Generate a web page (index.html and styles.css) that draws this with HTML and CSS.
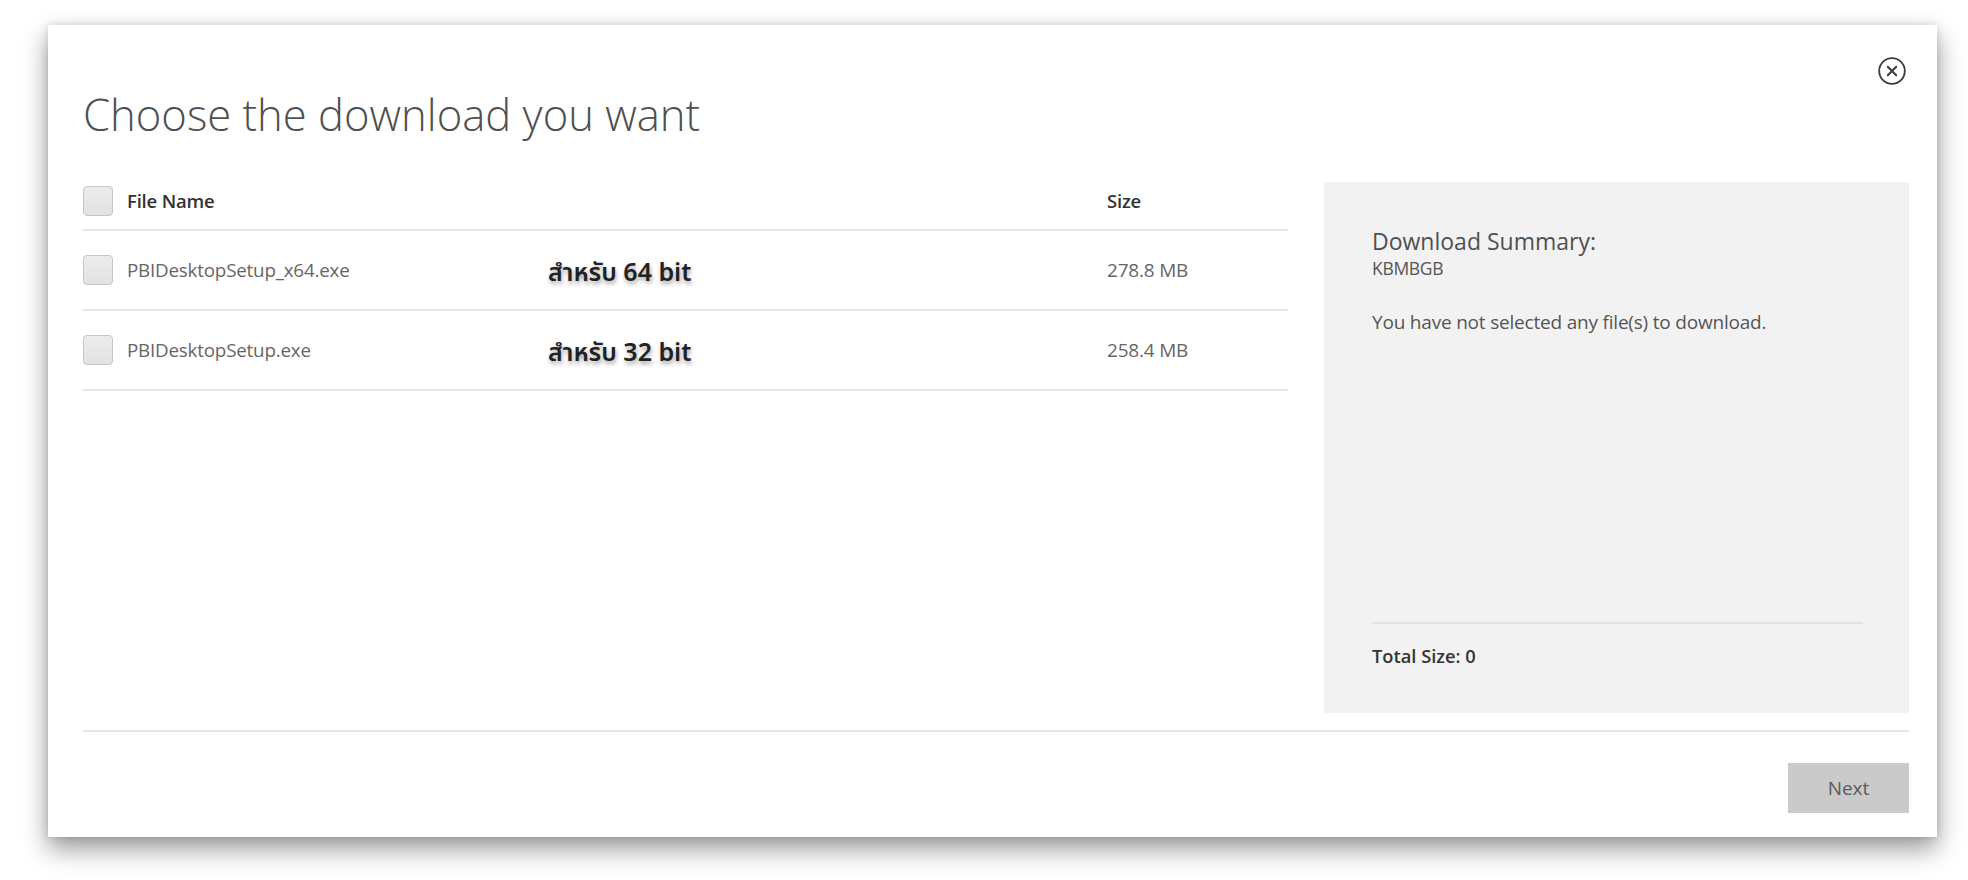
FILE: index.html
```html
<!DOCTYPE html>
<html lang="en">
<head>
<meta charset="utf-8">
<title>Choose the download you want</title>
<link rel="stylesheet" href="styles.css">
</head>
<body>
<div class="dialog">
  <button class="close" aria-label="Close">
    <svg width="30" height="30" viewBox="0 0 30 30"><circle cx="15" cy="15" r="12.8" fill="none" stroke="#3c3c3c" stroke-width="1.8"/><path d="M10.8 10.8 L19.2 19.2 M19.2 10.8 L10.8 19.2" stroke="#3c3c3c" stroke-width="2" stroke-linecap="round"/></svg>
  </button>
  <h1 class="title">Choose the download you want</h1>
  <div class="main">
    <div class="table">
      <div class="row head">
        <span class="check"></span>
        <span class="name">File Name</span>
        <span class="note"></span>
        <span class="size">Size</span>
      </div>
      <div class="row">
        <span class="check"></span>
        <span class="name">PBIDesktopSetup_x64.exe</span>
        <span class="note">สำหรับ 64 bit</span>
        <span class="size">278.8 MB</span>
      </div>
      <div class="row">
        <span class="check"></span>
        <span class="name">PBIDesktopSetup.exe</span>
        <span class="note">สำหรับ 32 bit</span>
        <span class="size">258.4 MB</span>
      </div>
    </div>
    <aside class="summary">
      <div class="summary-top">
        <h2 class="summary-title">Download Summary:</h2>
        <div class="summary-code">KBMBGB</div>
        <p class="summary-msg">You have not selected any file(s) to download.</p>
      </div>
      <div class="summary-total">Total Size: 0</div>
    </aside>
  </div>
  <div class="footer">
    <button class="next">Next</button>
  </div>
</div>
</body>
</html>
```

FILE: styles.css
```css
html, body {
  margin: 0;
  padding: 0;
  background: #ffffff;
}
body {
  width: 1968px;
  height: 880px;
  overflow: hidden;
  font-family: "Open Sans", "Noto Sans", "DejaVu Sans", sans-serif;
  color: #444;
}
.dialog {
  position: relative;
  box-sizing: border-box;
  width: 1889px;
  height: 812px;
  margin: 25px 0 0 48px;
  padding: 0 28px 0 35px;
  background: #fff;
  display: flex;
  flex-direction: column;
  box-shadow: 0 12px 24px rgba(0,0,0,0.4), 0 0 8px rgba(0,0,0,0.14);
}
.close {
  position: absolute;
  top: 31px;
  right: 30px;
  width: 30px;
  height: 30px;
  padding: 0;
  border: 0;
  background: none;
  display: flex;
}
.title {
  box-sizing: border-box;
  height: 157px;
  margin: 0;
  padding-top: 63px;
  font-size: 43.6px;
  line-height: 52px;
  font-weight: 300;
  color: #505050;
  white-space: nowrap;
}
.main {
  display: flex;
  gap: 36px;
  height: 531px;
}
.table {
  width: 1205px;
  flex: none;
}
.row {
  box-sizing: border-box;
  display: grid;
  grid-template-columns: 44px 421px 559px 1fr;
  align-items: center;
  height: 80px;
  border-bottom: 2px solid #e6e6e6;
}
.row.head {
  height: 49px;
  padding-bottom: 10px;
}
.check {
  box-sizing: border-box;
  width: 30px;
  height: 30px;
  border: 1px solid #c6c6c6;
  border-radius: 4px;
  background: linear-gradient(#ececec, #e2e2e2);
}
.name {
  font-size: 18.8px;
  letter-spacing: -0.2px;
  color: #666;
}
.size {
  font-size: 19px;
  letter-spacing: -0.2px;
  color: #666;
}
.head .name, .head .size {
  font-size: 18.5px;
  font-weight: 600;
  color: #333;
}
.note {
  font-family: "Noto Sans Thai", "Noto Sans", "DejaVu Sans", sans-serif;
  font-size: 25px;
  font-weight: 600;
  color: #222;
  padding-top: 6px;
  text-shadow: 1px 3px 4px rgba(0,0,0,0.35);
}
.summary {
  box-sizing: border-box;
  width: 585px;
  flex: none;
  background: #f2f2f2;
  padding: 0 46px 0 48px;
  display: flex;
  flex-direction: column;
  justify-content: space-between;
}
.summary-top {
  padding-top: 44px;
}
.summary-title {
  margin: 0;
  font-size: 23px;
  line-height: 30px;
  font-weight: 400;
  color: #505050;
}
.summary-code {
  font-size: 17.5px;
  line-height: 25px;
  letter-spacing: -0.3px;
  color: #555;
}
.summary-msg {
  margin: 30px 0 0;
  font-size: 19px;
  line-height: 22px;
  letter-spacing: -0.2px;
  color: #555;
}
.summary-total {
  border-top: 2px solid #e2e2e2;
  height: 91px;
  box-sizing: border-box;
  padding-top: 19px;
  font-size: 18.3px;
  font-weight: 600;
  color: #333;
}
.footer {
  margin-top: 17px;
  border-top: 2px solid #e6e6e6;
  padding-top: 31px;
  display: flex;
  justify-content: flex-end;
}
.next {
  width: 121px;
  height: 50px;
  border: 0;
  background: #cacaca;
  color: #5a5a5a;
  font-family: "Open Sans", "Noto Sans", sans-serif;
  font-size: 19px;
}
```
